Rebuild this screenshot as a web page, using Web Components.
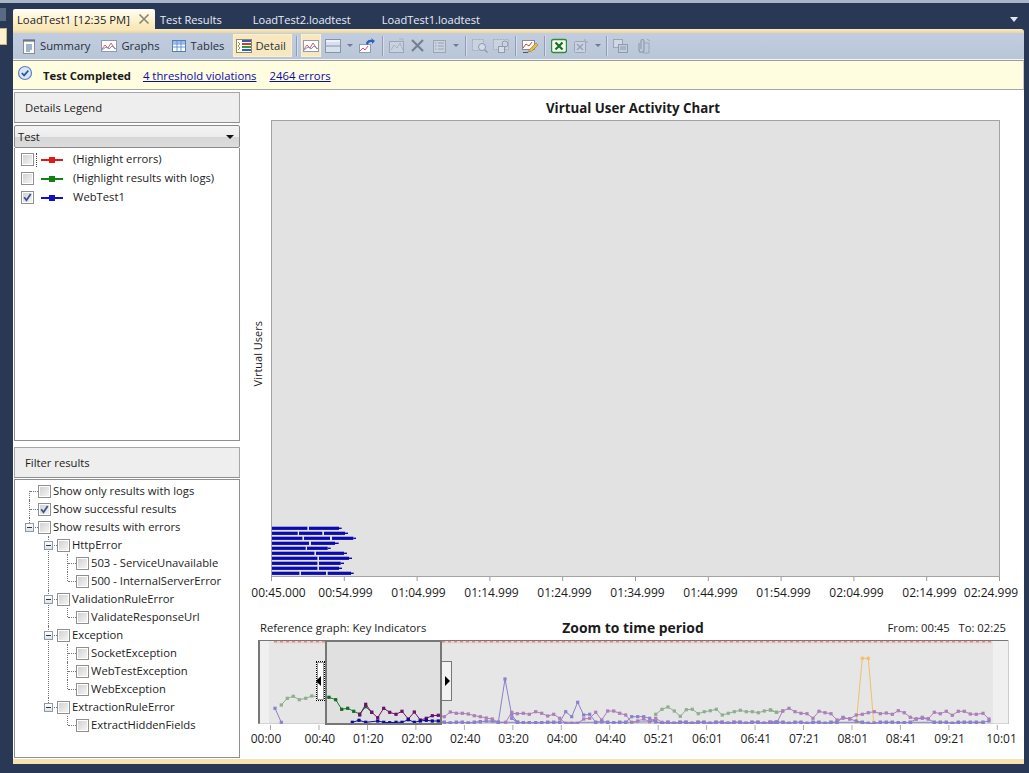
<!DOCTYPE html>
<html><head><meta charset="utf-8"><style>
html,body{margin:0;padding:0;background:#293955;overflow:hidden}
body{width:1029px;height:773px;font:11.25px "Open Sans","Noto Sans",sans-serif;color:#1b1b1b}
</style></head><body>
<ide-shell></ide-shell>
<script>
const $ = (cls,name)=>customElements.define(name,cls);
function base(html){return class extends HTMLElement{constructor(){super();this.attachShadow({mode:'open'}).innerHTML=html}}}
const FONT='"Open Sans","Noto Sans",sans-serif';
const ICONS={
summary:`<rect x="2.5" y="2.5" width="11" height="13" fill="#fffbe8" stroke="#7f8ea6"/><path d="M3 1v3M5 1v3M7 1v3M9 1v3M11 1v3M13 1v3" stroke="#4a5c78"/><path d="M5 7h6M5 9h6M5 11h6M5 13h4" stroke="#3a6fb5"/>`,
chart:`<rect x=".5" y="2.5" width="15" height="11" fill="#fff" stroke="#8d9bb0"/><path d="M1 11l3-4 3 3 3-5 4 6" fill="none" stroke="#d8606a"/><path d="M1 12l4-3 3 2 3-3 4 3" fill="none" stroke="#7c8fc0"/>`,
tables:`<rect x="1.5" y="2.5" width="13" height="11" fill="#fff" stroke="#4f7fc0"/><rect x="2" y="3" width="12" height="2.5" fill="#9dbce6"/><path d="M1.5 6h13M1.5 9h13M6 3v10M10 3v10" stroke="#6a94cc"/>`,
detail:`<rect x=".5" y="1.5" width="15" height="13" fill="#fff" stroke="#8a8a6a"/><path d="M6 3h9" stroke="#2e5fb8" stroke-width="2"/><path d="M6 6h9" stroke="#d23a2a" stroke-width="2"/><path d="M6 9h9" stroke="#2f9a3a" stroke-width="2"/><path d="M6 12h9" stroke="#2e5fb8" stroke-width="2"/><path d="M2 4l2 2-2 2 2 2-2 2" fill="none" stroke="#b88a20"/>`,
split:`<rect x=".5" y="1.5" width="15" height="13" fill="#d8e0ec" stroke="#8394ab"/><path d="M1 8h14" stroke="#8394ab"/><rect x="1" y="2" width="14" height="2" fill="#eef2f8"/>`,
arrow:`<rect x=".5" y="6.5" width="11" height="8" fill="#fff" stroke="#8d9bb0"/><path d="M1 13l3-3 2 2 3-4" fill="none" stroke="#d8506a"/><path d="M7 6c0-3 3-5 6-4l-1-2 4 3-3 3V4C10 4 9 5 9 7z" fill="#2b62b8"/>`,
chartoff:`<rect x=".5" y="3.5" width="14" height="11" fill="#c9d2df" stroke="#9aa6b6"/><path d="M2 12l3-5 3 3 3-5 3 7" fill="none" stroke="#a8b2c0"/><path d="M10 1h4v3" fill="none" stroke="#a8b2c0"/>`,
x:`<path d="M2 2l11 11M13 2L2 13" stroke="#75818f" stroke-width="2.2"/>`,
list:`<rect x="1.5" y="2.5" width="12" height="12" fill="#c9d2df" stroke="#9aa6b6"/><path d="M6 5h6M6 8h6M6 11h6M3 5h1.5M3 8h1.5M3 11h1.5" stroke="#98a4b4"/>`,
zoom1:`<rect x=".5" y="1.5" width="11" height="11" fill="#c9d2df" stroke="#a3aebd" stroke-dasharray="2 1"/><circle cx="10" cy="9" r="3.5" fill="#d5dce6" stroke="#8f9bab"/><path d="M12.5 11.5l3 3" stroke="#8f9bab" stroke-width="1.5"/>`,
zoom2:`<rect x=".5" y="1.5" width="15" height="10" fill="#c9d2df" stroke="#a3aebd" stroke-dasharray="2 1"/><rect x="5.5" y="8.5" width="6" height="6" fill="#d5dce6" stroke="#8f9bab"/><circle cx="12" cy="6" r="3" fill="none" stroke="#8f9bab"/>`,
pen:`<rect x=".5" y="2.5" width="12" height="9" fill="#fff" stroke="#8b8b8b"/><path d="M1 10l3-4 3 2 3-4" fill="none" stroke="#c8404a"/><path d="M6 14l2-3 6-6 2 2-6 6z" fill="#e9b84c" stroke="#9b7a20" stroke-width=".6"/><path d="M1 14.5h5" stroke="#555"/>`,
excel:`<rect x=".5" y="1.5" width="15" height="13" rx="2" fill="#f4f8ee" stroke="#2f8a3a" stroke-width="1.4"/><path d="M4.5 4.5l7 7M11.5 4.5l-7 7" stroke="#14702a" stroke-width="2.2"/>`,
exceloff:`<rect x="1.5" y="3.5" width="11" height="11" rx="1" fill="#c9d2df" stroke="#9aa6b6"/><path d="M4 6l6 6M10 6l-6 6" stroke="#98a4b4" stroke-width="1.5"/><path d="M12 1v3h3" fill="none" stroke="#98a4b4"/>`,
copy:`<rect x=".5" y="1.5" width="9" height="8" fill="#d1d8e3" stroke="#9aa6b6"/><rect x="5.5" y="6.5" width="9" height="8" fill="#c3ccd9" stroke="#8f9bab"/><path d="M7 9h6M7 11h6" stroke="#8f9bab"/>`,
clip:`<path d="M4 5v7c0 3 5 3 5 0V3c0-2-3-2-3 0v8" fill="none" stroke="#8f9bab" stroke-width="1.2"/><path d="M9 5h5v10H8" fill="none" stroke="#9aa6b6"/><path d="M12 1l3 2" stroke="#9aa6b6"/>`,
done:`<circle cx="8" cy="8" r="6.5" fill="#dbe6f8" stroke="#5d82c4" stroke-width="1.2"/><path d="M4.8 8l2.3 2.4 4.2-4.8" fill="none" stroke="#2a55a8" stroke-width="1.7"/>`
};
class XIcon extends HTMLElement{connectedCallback(){if(this.shadowRoot)return;const n=this.getAttribute('name');this.attachShadow({mode:'open'}).innerHTML=`<style>:host{display:block;width:16px;height:16px;flex:none}svg{display:block}</style><svg width="16" height="16" viewBox="0 0 16 16">${ICONS[n]||''}</svg>`}}
$(XIcon,'x-icon');

$(base(`<style>:host{display:flex;align-items:flex-end;height:26px;box-sizing:border-box}
.end{margin-left:auto;margin-right:6px;margin-bottom:7px;width:0;height:0;border:4px solid transparent;border-top:5px solid #dfe8f2;border-bottom:0}</style><slot></slot><span class="end"></span>`),'doc-tabs');

$(base(`<style>:host{display:flex;align-items:center;height:20px;font-size:11.1px;color:#e8eef6;white-space:nowrap}</style><slot></slot>`),'x-tab');

$(base(`<style>:host{display:flex;align-items:center;width:142px;height:20px;box-sizing:border-box;padding:0 4px;background:linear-gradient(#fffdf6,#fdf0cc 60%,#f9e6b2);border-radius:2px 2px 0 0;color:#1b1b1b;font-size:11.25px;white-space:nowrap}
svg{margin-left:auto;margin-right:1px;display:block}</style><slot></slot><svg width="12" height="12" viewBox="0 0 12 12"><path d="M1.5 1.5l9 9M10.5 1.5l-9 9" stroke="#8a8878" stroke-width="1.7"/></svg>`),'x-active-tab');

$(base(`<style>:host{display:flex;align-items:center;height:27px;box-sizing:border-box;background:linear-gradient(#c2cedf,#b9c6d8);padding:0 0 1px 7px;border-bottom:1px solid #f4f4f4;font-size:11.25px;color:#26303c}</style><slot></slot>`),'x-toolbar');

$(base(`<style>:host{display:flex;align-items:center;gap:var(--gap,3px);height:23px;white-space:nowrap;padding:0 1px;box-sizing:border-box}
:host([on]){background:#f7e8c0;box-shadow:inset 0 0 0 1px #fbf0d4}</style><slot></slot>`),'tb-btn');

$(base(`<style>:host{display:block;width:1px;height:20px;background:#8e9db2;box-shadow:1px 0 0 #d6dee9;flex:none}</style>`),'tb-sep');
$(base(`<style>:host{display:block;width:0;height:0;border:3px solid transparent;border-top:3px solid #6f7c8f;border-bottom:0;flex:none}</style>`),'tb-drop');

$(base(`<style>:host{display:flex;align-items:center;height:30px;box-sizing:border-box;background:#fffde0;border-top:1px solid #9c9c9c;border-bottom:1px solid #a6a6a6;border-right:1px solid #c9c9c9;padding:0 0 0 4px;font-size:11.3px}
x-icon{margin-top:-4px;margin-right:10px}
b{font-weight:700;font-size:11.3px;margin-right:12px}
::slotted(a){color:#0a0aa8;text-decoration:underline;margin-right:13px}</style>
<x-icon name="done"></x-icon><b><slot name="status"></slot></b><slot></slot>`),'x-notice');

$(base(`<style>:host{display:flex;align-items:center;height:31px;box-sizing:border-box;background:#eeeeee;border:1px solid #a7a7a7;border-bottom-color:#8f8f8f;padding-left:10px}</style><slot></slot>`),'panel-head');

$(base(`<style>:host{display:flex;align-items:center;height:23px;box-sizing:border-box;border:1px solid #8a8a8a;border-radius:2px;background:linear-gradient(#f4f4f4 0,#ececec 50%,#d6d6d6 51%,#dcdcdc 100%);padding:0 5px 0 3px}
i{margin-left:auto;width:0;height:0;border:4px solid transparent;border-top:4px solid #111;border-bottom:0}</style><slot></slot><i></i>`),'x-combo');

class XCheck extends HTMLElement{connectedCallback(){if(this.shadowRoot)return;this.attachShadow({mode:'open'}).innerHTML=`<style>:host{display:block;width:13px;height:13px;flex:none}svg{display:block}</style><svg width="13" height="13" viewBox="0 0 13 13"><defs><linearGradient id="g" x1="0" y1="0" x2="1" y2="1"><stop offset="0" stop-color="#d2d2d2"/><stop offset="1" stop-color="#f4f4f4"/></linearGradient></defs><rect x=".5" y=".5" width="12" height="12" fill="#fff" stroke="#8f8f8f"/><rect x="2" y="2" width="9" height="9" fill="url(#g)"/>${this.hasAttribute('checked')?'<path d="M3.2 6.3l2.3 3 4.2-6.2" fill="none" stroke="#3f5090" stroke-width="1.8"/>':''}</svg>`}}
$(XCheck,'x-check');

class LegendRow extends HTMLElement{connectedCallback(){if(this.shadowRoot)return;const c=this.getAttribute('color');this.attachShadow({mode:'open'}).innerHTML=`<style>:host{display:flex;align-items:center;height:19px;padding-left:6px;white-space:nowrap}
.l{position:relative;width:22px;height:2px;background:${c};margin:0 10px 0 7px;flex:none}
.l::after{content:"";position:absolute;left:8px;top:-2px;width:6px;height:6px;background:${c}}
.t{margin-top:-2px}
.f{width:0;height:14px;border-left:1px dotted #444;margin-left:2px;margin-right:-3px;visibility:${this.hasAttribute('focus')?'visible':'hidden'}}</style><x-check ${this.hasAttribute('checked')?'checked':''}></x-check><span class="f"></span><span class="l"></span><span class="t"><slot></slot></span>`}}
$(LegendRow,'legend-row');

class TreeNode extends HTMLElement{connectedCallback(){if(this.shadowRoot)return;const ch=this.hasAttribute('checked');const ex=this.hasAttribute('open');const lbl=this.getAttribute('label');
this.attachShadow({mode:'open'}).innerHTML=`<style>
:host{display:block;position:relative}
:host::before{content:"";position:absolute;left:10px;top:0;bottom:0;border-left:1px dotted #777}
:host(:first-child.top)::before{top:9px}
:host(:last-child)::before{bottom:auto;height:9px}
.r{display:flex;align-items:center;height:18px;white-space:nowrap}
.g{position:relative;width:19px;height:18px;flex:none}
.g::after{content:"";position:absolute;left:11px;top:9px;width:8px;border-top:1px dotted #777}
.e{position:absolute;z-index:1;left:6px;top:5px;width:9px;height:9px;box-sizing:border-box;border:1px solid #8f9aa8;background:linear-gradient(#fff,#dfe3e8)}
.e::after{content:"";position:absolute;left:1px;right:1px;top:3px;height:1px;background:#333}
.t{margin:-2px 0 0 2px}
.c{margin-left:19px}</style>
<div class="r"><span class="g">${ex?'<span class="e"></span>':''}</span><x-check ${ch?'checked':''}></x-check><span class="t">${lbl}</span></div><div class="c"><slot></slot></div>`}}
$(TreeNode,'tree-node');

$(base(`<style>:host{display:flex;flex-direction:column;width:226px;flex:none;padding-top:2px;margin-left:1px;box-sizing:border-box}
.box{background:#fff;border:1px solid #8f8f8f;border-top:0;box-sizing:border-box}
.a{height:293px}.b{height:279px;padding:2px 0 0 4px;margin-top:1px;border-top:1px solid #8f8f8f}
.s{height:6px}.c{height:2px}.l{padding-top:2px}</style>
<panel-head>Details Legend</panel-head><div class="c"></div>
<x-combo>Test</x-combo>
<div class="box a l"><legend-row color="#e01818" focus>(Highlight errors)</legend-row><legend-row color="#128012">(Highlight results with logs)</legend-row><legend-row color="#1010c8" checked>WebTest1</legend-row></div>
<div class="s"></div><panel-head>Filter results</panel-head>
<div class="box b">
<tree-node class="top" label="Show only results with logs"></tree-node>
<tree-node label="Show successful results" checked></tree-node>
<tree-node label="Show results with errors" open>
 <tree-node label="HttpError" open><tree-node label="503 - ServiceUnavailable"></tree-node><tree-node label="500 - InternalServerError"></tree-node></tree-node>
 <tree-node label="ValidationRuleError" open><tree-node label="ValidateResponseUrl"></tree-node></tree-node>
 <tree-node label="Exception" open><tree-node label="SocketException"></tree-node><tree-node label="WebTestException"></tree-node><tree-node label="WebException"></tree-node></tree-node>
 <tree-node label="ExtractionRuleError" open><tree-node label="ExtractHiddenFields"></tree-node></tree-node>
</tree-node>
</div>`),'side-panel');

class ActivityChart extends HTMLElement{constructor(){super();
const rows=[[172,177,267,275],[143,147,217,222,285,294],[157,162,240,246,310,318],[177,183,255,266],[167,171,233,242],[193,198,282,291],[202,207,297,306],[202,207,272,282],[202,207,267,276],[148,153,228,233,303,311]];
let b='';rows.forEach((r,i)=>{const y=528.3+i*5-121;const X=v=>250+v/3-272;let start=65;for(let k=0;k<r.length-1;k+=2){b+=`<rect x="${X(start).toFixed(1)}" y="${(y-1.6).toFixed(1)}" width="${(X(r[k])-X(start)).toFixed(1)}" height="3.2" fill="#0a0ab0"/>`;start=r[k+1];}
 const n=r.length;b+=`<rect x="${X(r[n-2]).toFixed(1)}" y="${(y-.7).toFixed(1)}" width="${((r[n-1]-r[n-2])/3).toFixed(1)}" height="1.4" fill="#0a0ab0"/>`;});
const lbls=['00:45.000','00:54.999','01:04.999','01:14.999','01:24.999','01:34.999','01:44.999','01:54.999','02:04.999','02:14.999','02:24.999'];
let ticks='';for(let i=0;i<11;i++){const x=.5+i*72.8;ticks+=`<path d="M${x} 0v4" stroke="#999"/>`}
this.attachShadow({mode:'open'}).innerHTML=`<style>:host{display:block;font-size:12px}
h2{margin:0;height:30px;box-sizing:border-box;padding-top:9px;font:700 13.3px/18px ${FONT};text-align:center;width:778px}
.m{display:flex;height:457px}
.y{width:27px;flex:none;display:flex;align-items:center;justify-content:center}
.y span{writing-mode:vertical-rl;transform:rotate(180deg);white-space:nowrap;font-size:11px;margin:11px 0 0 0}
.p{width:729px;height:457px;box-sizing:border-box;background:#e2e2e2;border:1px solid #a3a3a3;flex:none}
.p svg{display:block}
.t{display:block;margin-left:27px;overflow:visible}
.a{display:flex;margin-left:7px;margin-top:3px;gap:18px;line-height:16px;white-space:nowrap}
.a span{width:55px;flex:none;text-align:center}
.a span:first-child{margin-right:-6px}
.a span:last-child{margin-left:-11.5px}</style>
<h2>Virtual User Activity Chart</h2>
<div class="m"><div class="y"><span>Virtual Users</span></div><div class="p"><svg width="727" height="455" viewBox="0 0 727 455">${b}</svg></div></div>
<svg class="t" width="740" height="5">${ticks}</svg>
<div class="a">${lbls.map(l=>`<span>${l}</span>`).join('')}</div>`}}
$(ActivityChart,'activity-chart');

class RefChart extends HTMLElement{constructor(){super();
const Z7=(p)=>p.map(([x,y])=>[250+x/3-259,615+y/3-640]);
const Z8=(p)=>p.map(([x,y])=>[510+x/3-259,615+y/3-640]);
const Z9=(p)=>p.map(([x,y])=>[770+x/3-259,615+y/3-640]);
const base8=[];for(let x=477;x<=802;x+=18)base8.push([x,x%54<18?325:322]);
const base9=[];for(let x=6;x<=204;x+=18)base9.push([x,x%54<18?325:322]);
const green=[...Z7([[97,270],[115,250],[133,244],[151,254],[170,250],[188,243],[206,245],[240,247],[260,254],[278,283],[296,280],[314,289],[332,297],[350,275],[368,292]])];
const green2=[...Z8([[440,298],[459,283],[477,276],[496,288],[514,304],[532,284],[550,283],[568,296],[586,290],[604,287],[622,283],[640,300],[658,295],[676,290],[694,286],[712,290],[730,290],[748,293],[766,288],[784,285],[802,292]]),...Z9([[5,285],[23,292],[41,288]])];
const purple=[...Z7([[332,300],[350,268],[368,292],[386,308],[404,280],[422,292],[441,298],[459,289],[478,312],[496,291],[514,315],[532,310],[550,302],[568,301],[586,305],[604,291],[622,295],[640,295],[658,297],[676,302],[694,305],[712,309],[730,312],[748,322],[770,322],[788,292]]),
...Z8([[8,295],[25,296],[43,295],[61,298],[80,290],[98,295],[116,303],[134,298],[152,310],[170,325],[188,325],[206,325],[224,312],[242,310],[260,292],[278,315],[296,288],[314,288],[332,295],[350,300],[368,322],[386,318],[404,312],[422,320],[440,310],[459,322],...base8]),
...Z9([[6,322],[24,322],[41,288],[60,280],[78,290],[96,295],[114,296],[132,310],[150,289],[168,293],[186,296],[204,315],[222,310],[242,311],[262,300],[280,298],[298,293],[316,290],[334,296],[352,294],[370,298],[388,287],[406,293],[424,307],[442,312],[460,307],[478,311],[496,292],[514,296],[532,289],[550,301],[568,289],[586,289],[604,297],[622,298],[642,295],[660,312]])];
const blue=[...Z7([[78,280],[97,322]])];
const blue2=[...Z7([[310,322],[330,316],[350,322],[386,318],[404,322],[422,323],[441,322],[459,322],[478,314],[496,322],[514,318],[532,316],[550,318],[568,318],[586,322],[604,324],[622,322],[640,322],[658,324],[676,322],[694,320],[712,318],[730,318],[748,322],[768,192],[788,300],[806,322]]),
...Z8([[8,310],[25,322],[43,323],[61,323],[80,323],[98,323],[116,322],[134,322],[152,322],[170,290],[188,305],[206,262],[224,300],[242,298],[260,322],[278,320],[296,322],[314,323],[332,322],[350,322],[368,305],[386,305],[404,305],[422,310],[440,320],[459,325],...base8]),
...Z9([...base9,[222,307],[242,312],[262,318],[280,322],[298,325],[316,325],[334,322],[352,322],[370,322],[388,323],[406,323],[424,322],[442,312],[460,310],[478,312],[496,322],[514,322],[532,322],[550,325],[568,322],[586,322],[604,322],[622,322],[642,322],[660,318]])];
const orange=Z9([[262,322],[280,130],[298,130],[314,322]]);
const ser=(pts,line,dot,r=1.6)=>{const s=pts.map(p=>p[0].toFixed(1)+','+p[1].toFixed(1)).join(' ');return `<polyline points="${s}" fill="none" stroke="${line}" stroke-width="1"/>`+pts.map(p=>`<rect x="${(p[0]-r).toFixed(1)}" y="${(p[1]-r).toFixed(1)}" width="${2*r}" height="${2*r}" fill="${dot}"/>`).join('')};
const lx=['00:00','00:40','01:20','02:00','02:40','03:20','04:00','04:40','05:21','06:01','06:41','07:21','08:01','08:41','09:21','10:01'];
let ticks='';for(let i=0;i<16;i++){const x=i==0?12.5:61+(i-1)*48.45;ticks+=`<path d="M${x.toFixed(1)} 0v5" stroke="#aaa"/>`}
let dashes='';for(let x=16;x<734;x+=6)dashes+=`<rect x="${x}" y="1" width="3" height="1.4" fill="#d98a8a"/>`;
this.attachShadow({mode:'open'}).innerHTML=`<style>:host{display:block;font-size:11.25px}
.h{display:grid;grid-template-columns:1fr auto 1fr;align-items:center;height:26px;padding:0 14px 0 16px;width:776px;box-sizing:border-box}
.h b{font:700 13.9px ${FONT}}
.h span:last-child{text-align:right}
.f{position:relative;width:751px;height:84px;margin-left:14px;box-sizing:border-box}
.f svg{display:block}
.a{display:flex;margin-left:-2.25px;line-height:16px;margin-top:0;font-size:12px}
.a span{flex:none;width:48.45px;text-align:center}
.a span:first-child{margin-right:5.5px}
.a span:last-child{margin-left:3.5px}
.sel{position:absolute;left:67px;top:0;width:117px;height:85px;box-sizing:border-box;border:2px solid #777;overflow:hidden}
.hl{position:absolute;top:21px;width:10px;height:40px;box-sizing:border-box;background:#f2f2f2;border:1px solid #777}
.hl.l{left:58px;border:1px dotted #000;outline:1px solid #999;outline-offset:-2px;background:#fff;width:9px}
.hl.r{left:184px;border-left:0}
.hl::after{content:"";position:absolute;top:14px;border:5px solid transparent}
.hl.l::after{left:-1px;border-right:5px solid #000;border-left:0}
.hl.r::after{left:3px;border-left:5px solid #000;border-right:0}
</style>
<div class="h"><span>Reference graph: Key Indicators</span><b>Zoom to time period</b><span>From: 00:45 &nbsp; To: 02:25</span></div>
<div class="f"><svg width="751" height="84" viewBox="0 0 751 84">
<rect width="751" height="84" fill="#f0f0f0"/><rect x="11" width="724" height="84" fill="#e6e6e6"/>
<rect x="16" y="1" width="718" height="2.5" fill="#f0cfcf"/>${dashes}
<path d="M0 .5H751" stroke="#777"/><path d="M1 0V84" stroke="#777" stroke-width="2"/><path d="M750.5 0V84" stroke="#ccc"/><path d="M0 84H751" stroke="#bbb"/>
${ser(orange,'#f0c070','#f0c070')}${ser(blue,'#8a80cc','#8a80cc')}${ser(blue2,'#8a80cc','#8a80cc')}${ser(green,'#8fae90','#8fae90')}${ser(green2,'#8fae90','#8fae90')}${ser(purple,'#ab7fb8','#ab7fb8')}${ser(blue2.filter(p=>p[1]>81),'#8a80cc','#8a80cc')}
</svg><div class="sel"><svg width="113" height="81" viewBox="69 2 113 81" style="background:#e0e0e0">${ser(green,'#1c7a2c','#156a25')}${ser(purple,'#70106f','#6a0f6a')}${ser(blue2,'#0a0aa0','#0a0aa0')}</svg></div>
<span class="hl l"></span><span class="hl r"></span></div>
<svg width="751" height="6" viewBox="0 0 751 6" style="display:block;margin-left:14px;margin-top:1px">${ticks}</svg>
<div class="a">${lx.map(l=>`<span>${l}</span>`).join('')}</div>`}}
$(RefChart,'ref-chart');

$(base(`<style>:host{display:flex;flex-direction:column;width:1029px;height:773px;overflow:hidden;background:#293955}
.top{height:3px;background:#a9b6ca;flex:none}
.grid{display:flex}
.gut{width:13px;flex:none;padding-top:5px;box-sizing:border-box}
.gut .a{width:6px;height:13px;background:#5a6a84;margin-bottom:7px}
.gut .b{width:7px;height:17px;background:#fdf2cf;border:1px solid #c9b67c;border-left:0;box-sizing:border-box}
.doc{width:1011px;flex:none}
.ac{height:4px;background:linear-gradient(#f9edc6,#e8d49f);border-radius:0 3px 0 0}
.body{display:flex;height:669px;background:#fff}
.rt{flex:1;padding-left:4px;min-width:0}
.bt{height:5px;background:#f8e2ad}
</style><div class="top"></div>
<div class="grid"><div class="gut"><div class="a"></div><div class="b"></div></div><div class="doc"><slot name="tabs"></slot><div class="ac"></div><slot name="tools"></slot><slot name="notice"></slot>
<div class="body"><side-panel></side-panel><div class="rt"><activity-chart></activity-chart><ref-chart style="margin-top:13px"></ref-chart></div></div><div class="bt"></div></div></div>`),'ide-frame');

class IdeShell extends HTMLElement{constructor(){super();this.attachShadow({mode:'open'}).innerHTML=`<style>:host{display:block;font-family:${FONT}}</style><ide-frame>
<doc-tabs slot="tabs"><x-active-tab>LoadTest1 [12:35 PM]</x-active-tab><x-tab style="margin-left:5px">Test Results</x-tab><x-tab style="margin-left:31px">LoadTest2.loadtest</x-tab><x-tab style="margin-left:31px">LoadTest1.loadtest</x-tab></doc-tabs>
<x-toolbar slot="tools">
<tb-btn><x-icon name="summary"></x-icon>Summary</tb-btn>
<tb-btn style="margin-left:9px;--gap:4px"><x-icon name="chart"></x-icon>Graphs</tb-btn>
<tb-btn style="margin-left:9px;--gap:4px"><x-icon name="tables"></x-icon>Tables</tb-btn>
<tb-btn on style="margin-left:8px;padding:0 0 0 3px;width:59px"><x-icon name="detail"></x-icon>Detail</tb-btn>
<tb-sep style="margin:0 4px"></tb-sep>
<tb-btn on style="padding:0 2px"><x-icon name="chart"></x-icon></tb-btn>
<tb-btn style="margin-left:3px"><x-icon name="split"></x-icon></tb-btn><tb-drop style="margin-left:5px"></tb-drop>
<tb-btn style="margin-left:5px"><x-icon name="arrow"></x-icon></tb-btn>
<tb-sep style="margin:0 5px 0 6px"></tb-sep>
<tb-btn><x-icon name="chartoff"></x-icon></tb-btn>
<tb-btn style="margin-left:3px"><x-icon name="x"></x-icon></tb-btn>
<tb-btn style="margin-left:4px"><x-icon name="list"></x-icon></tb-btn><tb-drop style="margin-left:4px"></tb-drop>
<tb-sep style="margin:0 5px 0 6px"></tb-sep>
<tb-btn><x-icon name="zoom1"></x-icon></tb-btn>
<tb-btn style="margin-left:3px"><x-icon name="zoom2"></x-icon></tb-btn>
<tb-sep style="margin:0 5px"></tb-sep>
<tb-btn><x-icon name="pen"></x-icon></tb-btn>
<tb-sep style="margin:0 5px"></tb-sep>
<tb-btn><x-icon name="excel"></x-icon></tb-btn>
<tb-btn style="margin-left:4px"><x-icon name="exceloff"></x-icon></tb-btn><tb-drop style="margin-left:5px"></tb-drop>
<tb-sep style="margin:0 5px"></tb-sep>
<tb-btn><x-icon name="copy"></x-icon></tb-btn>
<tb-btn style="margin-left:4px"><x-icon name="clip"></x-icon></tb-btn>
</x-toolbar>
<x-notice slot="notice"><span slot="status">Test Completed</span><a>4 threshold violations</a><a>2464 errors</a></x-notice>
</ide-frame>`}}
$(IdeShell,'ide-shell');
</script></body></html>
